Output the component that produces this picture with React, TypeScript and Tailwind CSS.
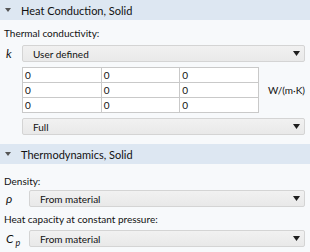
import React from "react";

const Caret = () => (
  <svg width="7" height="5" viewBox="0 0 7 5">
    <path d="M0 0h7L3.5 5z" fill="#1e1e1e" />
  </svg>
);

const SectionHeader = ({ title }: { title: string }) => (
  <div className="flex h-[20px] items-center bg-[#dde7f2] pl-[5px]">
    <svg width="6" height="4" viewBox="0 0 6 4" className="mr-[10px]">
      <path d="M0 0h6L3 4z" fill="#555" />
    </svg>
    <span className="text-[11px]">{title}</span>
  </div>
);

const Select = ({ value }: { value: string }) => (
  <div className="flex h-[17px] flex-1 items-center justify-between rounded-[2px] border border-[#d4d4d4] bg-gradient-to-b from-[#f1f1f1] to-[#e9e9e9] pl-[10px] pr-[4px]">
    <span>{value}</span>
    <Caret />
  </div>
);

const Row = ({ sym, w, children }: { sym: React.ReactNode; w: string; children: React.ReactNode }) => (
  <div className="flex items-center">
    <div className={w + " pl-[6px] text-[12px] italic"}>{sym}</div>
    {children}
  </div>
);

export default function App() {
  const cells = [0, 1, 2, 3, 4, 5, 6, 7, 8];
  return (
    <div
      className="h-[252px] w-[310px] overflow-hidden bg-[#f7f9fb] text-[10px] leading-none text-[#111]"
      style={{ fontFamily: "Lato, 'Open Sans', sans-serif" }}
    >
      <SectionHeader title="Heat Conduction, Solid" />
      <div className="pr-[5px]">
        <div className="mt-[5px] h-[17px] pl-[4px] leading-[17px]">Thermal conductivity:</div>
        <div className="mt-[3px]">
          <Row sym="k" w="w-[22px]">
            <Select value="User defined" />
          </Row>
        </div>
        <div className="ml-[22px] mt-[5px] flex items-center">
          <div className="grid w-[239px] grid-cols-3 gap-px border border-[#c9c9c9] bg-[#c9c9c9]">
            {cells.map((i) => (
              <div key={i} className="h-[14px] bg-white pl-[2px] leading-[14px]">
                0
              </div>
            ))}
          </div>
          <span className="ml-[9px]">W/(m·K)</span>
        </div>
        <div className="ml-[22px] mt-[5px] flex">
          <Select value="Full" />
        </div>
      </div>
      <div className="mt-[9px]">
        <SectionHeader title="Thermodynamics, Solid" />
      </div>
      <div className="pr-[5px]">
        <div className="mt-[9px] h-[17px] pl-[4px] leading-[17px]">Density:</div>
        <Row sym="ρ" w="w-[29px]">
          <Select value="From material" />
        </Row>
        <div className="mt-[4px] h-[17px] pl-[4px] leading-[17px]">Heat capacity at constant pressure:</div>
        <div className="mt-[2px]">
          <Row
            sym={
              <span>
                C<span className="relative top-[3px] ml-[2px] text-[9px]">p</span>
              </span>
            }
            w="w-[29px]"
          >
            <Select value="From material" />
          </Row>
        </div>
      </div>
    </div>
  );
}
